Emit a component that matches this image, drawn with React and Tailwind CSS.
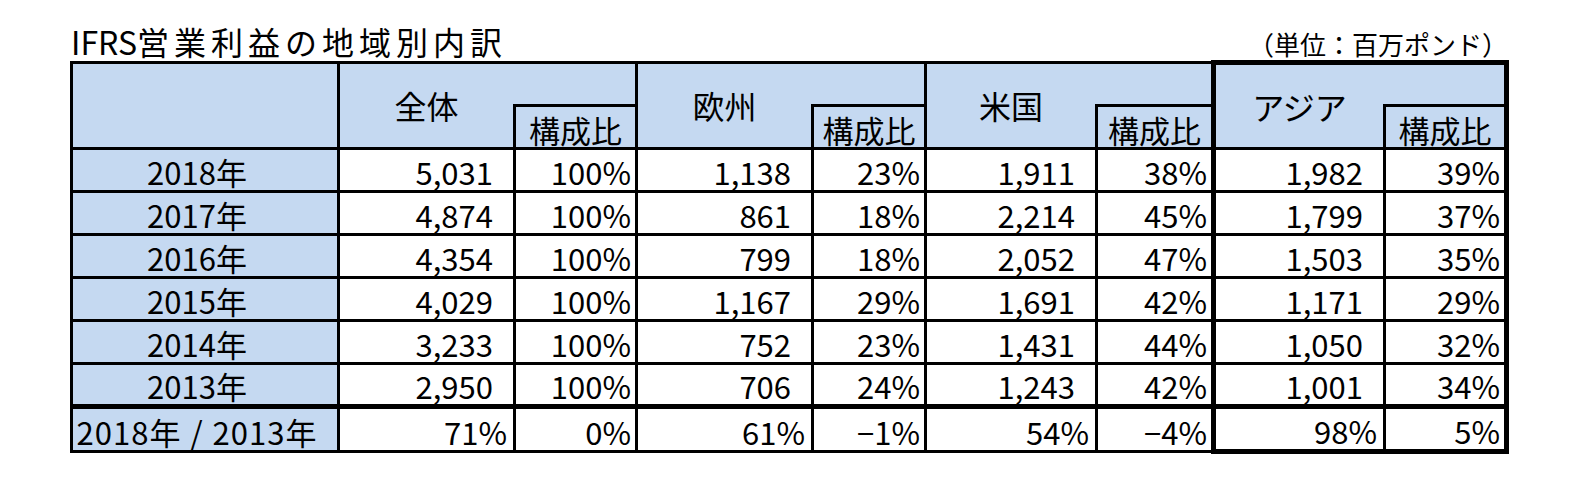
import React from "react";

const rows = [
  ["2018年", "5,031", "100%", "1,138", "23%", "1,911", "38%", "1,982", "39%"],
  ["2017年", "4,874", "100%", "861", "18%", "2,214", "45%", "1,799", "37%"],
  ["2016年", "4,354", "100%", "799", "18%", "2,052", "47%", "1,503", "35%"],
  ["2015年", "4,029", "100%", "1,167", "29%", "1,691", "42%", "1,171", "29%"],
  ["2014年", "3,233", "100%", "752", "23%", "1,431", "44%", "1,050", "32%"],
  ["2013年", "2,950", "100%", "706", "24%", "1,243", "42%", "1,001", "34%"],
];

const lastRow = ["71%", "0%", "61%", "−1%", "54%", "−4%", "98%", "5%"];

const groups = ["全体", "欧州", "米国", "アジア"];
const widths = [267, 176, 122, 176, 113, 171, 117, 171, 122];

const cell = "border-[3px] border-black p-0 leading-[30px] align-bottom";

const App = () => {
  return (
    <div className="w-[1581px] h-[487px] bg-white text-black font-['Noto_Sans_CJK_JP',sans-serif]">
      <div className="ml-[70px] w-[1439px] pt-[21px]">
        {/* title + unit */}
        <div className="flex items-end justify-between h-[39px]">
          <div className="text-[32px] leading-[38px] pl-[1px]">
            IFRS<span className="tracking-[5px]">営業利益の地域別内訳</span>
          </div>
          <div className="text-[26px] leading-[30px] pr-[1px] mb-[1px]">（単位：百万ポンド）</div>
        </div>

        <table className="table-fixed border-collapse text-[31px]">
          <colgroup>
            {widths.map((w, i) => (
              <col key={i} style={{ width: w }} />
            ))}
          </colgroup>
          <thead>
            <tr>
              <td rowSpan={2} className={`${cell} bg-[#c5d9f1]`}></td>
              {groups.map((g, i) => {
                const asia = i === 3;
                return (
                  <React.Fragment key={g}>
                    <td
                      rowSpan={2}
                      className={`${cell} bg-[#c5d9f1] border-r-0 text-center align-middle ${
                        asia ? "border-l-[5px] border-t-[5px]" : ""
                      }`}
                    >
                      <span className="text-[32px]">{g}</span>
                    </td>
                    <td
                      className={`${cell} h-[43px] bg-[#c5d9f1] border-l-0 border-b-0 ${
                        asia ? "border-t-[5px] border-r-[5px]" : ""
                      }`}
                    ></td>
                  </React.Fragment>
                );
              })}
            </tr>
            <tr>
              {groups.map((g, i) => (
                <td
                  key={g}
                  className={`${cell} h-[43px] bg-[#c5d9f1] text-center pb-[2px] ${
                    i === 3 ? "border-r-[5px]" : ""
                  }`}
                >
                  構成比
                </td>
              ))}
            </tr>
          </thead>
          <tbody>
            {rows.map((r) => (
              <tr key={r[0]}>
                {r.map((v, i) => {
                  let cls = "";
                  if (i === 0) cls = "bg-[#c5d9f1] text-center pr-[16px]";
                  else if (i % 2 === 1) cls = "text-right pr-[20px]";
                  else cls = "text-right pr-[4px]";
                  if (i === 7) cls += " border-l-[5px]";
                  if (i === 8) cls += " border-r-[5px]";
                  return (
                    <td key={i} className={`${cell} h-[43px] pb-[3px] ${cls}`}>
                      {v}
                    </td>
                  );
                })}
              </tr>
            ))}
            <tr>
              <td className={`${cell} h-[45px] border-t-[5px] pb-[3px] bg-[#c5d9f1] text-center pr-[16px] tracking-[1px]`}>
                2018年<span className="mx-[9px]">/</span>2013年
              </td>
              {lastRow.map((v, i) => {
                let cls = i % 2 === 0 ? "pr-[6px]" : "pr-[4px]";
                if (i === 6) cls += " border-l-[5px] border-b-[5px]";
                if (i === 7) cls += " border-r-[5px] border-b-[5px]";
                return (
                  <td key={i} className={`${cell} h-[45px] border-t-[5px] pb-[3px] text-right ${cls}`}>
                    {v}
                  </td>
                );
              })}
            </tr>
          </tbody>
        </table>
      </div>
    </div>
  );
};

export default App;
